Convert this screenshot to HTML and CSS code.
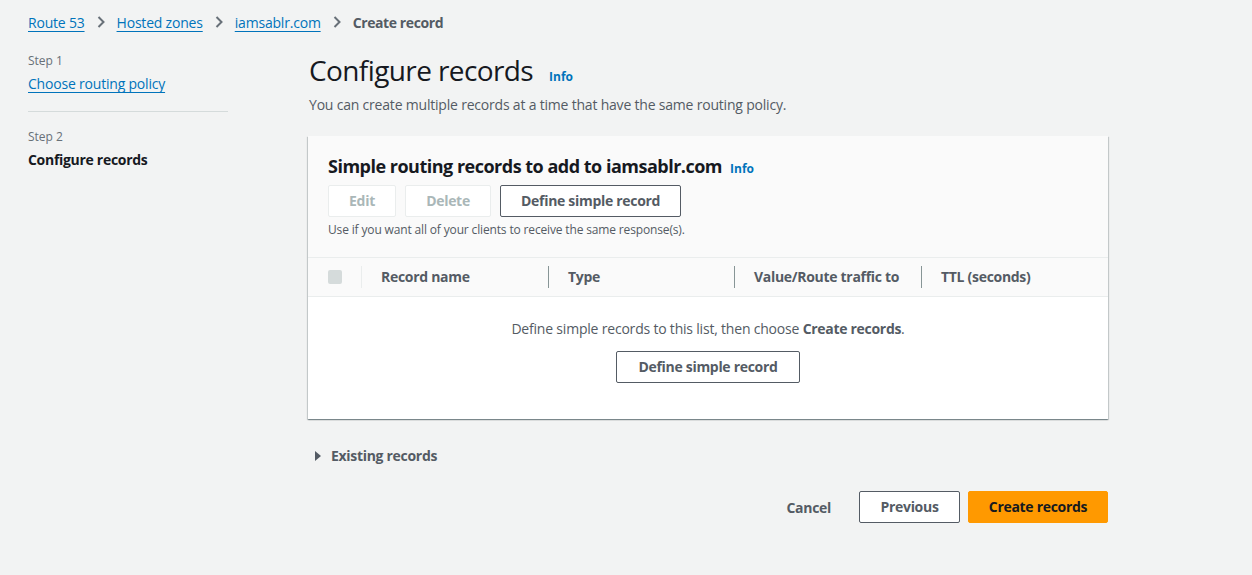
FILE: index.html
```html
<!DOCTYPE html>
<html>
<head>
<meta charset="utf-8">
<link rel="stylesheet" href="styles.css">
</head>
<body>
<div class="page">
  <nav class="breadcrumbs">
    <a href="#" class="crumb-link">Route 53</a>
    <svg class="chev" width="12" height="14" viewBox="0 0 12 14"><path d="M3.5 2 L8.5 7 L3.5 12" fill="none" stroke="#687078" stroke-width="2"/></svg>
    <a href="#" class="crumb-link">Hosted zones</a>
    <svg class="chev" width="12" height="14" viewBox="0 0 12 14"><path d="M3.5 2 L8.5 7 L3.5 12" fill="none" stroke="#687078" stroke-width="2"/></svg>
    <a href="#" class="crumb-link">iamsablr.com</a>
    <svg class="chev" width="12" height="14" viewBox="0 0 12 14"><path d="M3.5 2 L8.5 7 L3.5 12" fill="none" stroke="#687078" stroke-width="2"/></svg>
    <span class="crumb-current">Create record</span>
  </nav>
  <div class="layout">
    <aside class="steps">
      <div class="step">
        <div class="step-label">Step 1</div>
        <a href="#" class="step-link">Choose routing policy</a>
      </div>
      <div class="step-divider"></div>
      <div class="step">
        <div class="step-label">Step 2</div>
        <div class="step-current">Configure records</div>
      </div>
    </aside>
    <main class="main">
      <div class="title-row">
        <h1 class="title">Configure records</h1>
        <a href="#" class="info">Info</a>
      </div>
      <p class="desc">You can create multiple records at a time that have the same routing policy.</p>
      <section class="container">
        <div class="container-header">
          <div class="header-title-row">
            <h2 class="header-title">Simple routing records to add to iamsablr.com</h2>
            <a href="#" class="info info-small">Info</a>
          </div>
          <div class="actions">
            <button class="btn btn-disabled btn-edit">Edit</button>
            <button class="btn btn-disabled btn-delete">Delete</button>
            <button class="btn btn-normal">Define simple record</button>
          </div>
          <div class="hint">Use if you want all of your clients to receive the same response(s).</div>
        </div>
        <div class="table-head">
          <div class="th th-check"><span class="checkbox"></span></div>
          <div class="th th-name">Record name</div>
          <div class="th th-type">Type</div>
          <div class="th th-value">Value/Route traffic to</div>
          <div class="th th-ttl">TTL (seconds)</div>
        </div>
        <div class="empty">
          <div class="empty-text">Define simple records to this list, then choose <b>Create records</b>.</div>
          <button class="btn btn-normal">Define simple record</button>
        </div>
      </section>
      <div class="expander">
        <svg width="10" height="12" viewBox="0 0 10 12"><path d="M2 1 L8 6 L2 11 Z" fill="#545b64"/></svg>
        <span>Existing records</span>
      </div>
      <div class="footer">
        <button class="btn-link">Cancel</button>
        <button class="btn btn-normal btn-footer">Previous</button>
        <button class="btn btn-primary btn-footer">Create records</button>
      </div>
    </main>
  </div>
</div>
</body>
</html>
```
FILE: styles.css
```css
* { box-sizing: border-box; }
html, body { margin: 0; padding: 0; }
body {
  background: #f2f3f3;
  font-family: "Open Sans", "Noto Sans", Arial, sans-serif;
  font-size: 14px;
  letter-spacing: -0.2px;
  color: #16191f;
  width: 1252px;
  height: 575px;
  overflow: hidden;
}
.page { padding: 12px 28px 0 28px; }
.breadcrumbs {
  display: flex;
  align-items: center;
  height: 20px;
  font-size: 14px;
}
.crumb-link {
  color: #0073bb;
  text-decoration: underline;
  text-underline-offset: 3px;
}
.chev { margin: 0 10px 0 10px; }
.crumb-current { color: #545b64; font-weight: 700; letter-spacing: -0.4px; }

.layout { display: flex; gap: 80px; margin-top: 19px; }
.steps { width: 200px; flex: none; }
.step-label { font-size: 12px; color: #687078; line-height: 20px; letter-spacing: 0; }
.step-link {
  display: inline-block;
  color: #0073bb;
  text-decoration: underline;
  text-underline-offset: 3px;
  line-height: 20px;
  margin-top: 3px;
}
.step-divider { height: 1px; background: #d5dbdb; margin: 17px 0 15px 0; }
.step-current { font-weight: 700; line-height: 20px; margin-top: 3px; letter-spacing: -0.3px; }

.main { width: 800px; flex: none; }
.title-row { display: flex; align-items: baseline; margin-top: 1px; }
.title {
  margin: 0;
  font-size: 28px;
  font-weight: 400;
  line-height: 36px;
  padding-left: 1px;
  letter-spacing: -0.6px;
}
.info {
  color: #0073bb;
  font-size: 12px;
  font-weight: 700;
  text-decoration: none;
  margin-left: 16px;
  letter-spacing: 0;
}
.info-small { margin-left: 8px; }
.desc { margin: 6px 0 0 1px; color: #545b64; line-height: 22px; }

.container {
  margin-top: 20px;
  background: #fff;
  box-shadow: 0 1px 1px 0 rgba(0,28,36,0.3), 1px 1px 1px 0 rgba(0,28,36,0.15), -1px 1px 1px 0 rgba(0,28,36,0.15);
}
.container-header {
  background: #fafafa;
  padding: 18px 20px 19px 20px;
  border-bottom: 1px solid #eaeded;
}
.header-title-row { display: flex; align-items: baseline; }
.header-title {
  margin: 0;
  font-size: 18px;
  font-weight: 700;
  line-height: 24px;
  letter-spacing: -0.5px;
}
.actions { display: flex; gap: 9px; margin-top: 7px; }
.btn {
  font-family: inherit;
  font-size: 14px;
  font-weight: 700;
  letter-spacing: -0.3px;
  height: 32px;
  padding: 0 20px;
  border-radius: 2px;
  background: #fff;
  line-height: 30px;
}
.btn-disabled { border: 1px solid #eaeded; color: #aab7b8; }
.btn-edit { width: 68px; }
.btn-delete { width: 86px; }
.btn-normal { border: 1px solid #545b64; color: #545b64; }
.hint { font-size: 12px; color: #545b64; margin-top: 5px; line-height: 16px; letter-spacing: -0.15px; }

.table-head {
  display: flex;
  align-items: center;
  height: 39px;
  background: #fafafa;
  border-bottom: 1px solid #eaeded;
  font-weight: 700;
  color: #545b64;
  letter-spacing: -0.3px;
}
.th { position: relative; padding-left: 20px; line-height: 20px; }
.th-check { width: 53px; padding-left: 20px; display: flex; align-items: center; }
.checkbox { display: block; width: 14px; height: 14px; background: #d5dbdb; border-radius: 2px; }
.th-name { width: 187px; }
.th-type { width: 186px; }
.th-value { width: 187px; }
.th-ttl { flex: 1; }
.th-name::before, .th-type::before, .th-value::before, .th-ttl::before {
  content: "";
  position: absolute;
  left: 0;
  top: -1px;
  width: 1px;
  height: 22px;
  background: #879596;
}
.th-name::before { background: #eaeded; }

.empty {
  display: flex;
  flex-direction: column;
  align-items: center;
  padding: 22px 0 36px 0;
}
.empty-text { color: #545b64; line-height: 20px; }
.empty-text b { font-weight: 700; letter-spacing: -0.3px; }
.empty .btn { margin-top: 12px; width: 184px; padding: 0; }

.expander {
  display: flex;
  align-items: center;
  gap: 8px;
  margin-top: 27px;
  padding-left: 5px;
  font-weight: 700;
  color: #545b64;
  line-height: 20px;
  letter-spacing: -0.3px;
}
.footer {
  display: flex;
  justify-content: flex-end;
  align-items: center;
  gap: 8px;
  margin-top: 25px;
}
.btn-link {
  font-family: inherit;
  font-size: 14px;
  font-weight: 700;
  letter-spacing: -0.3px;
  background: none;
  border: none;
  color: #545b64;
  padding: 0 20px;
  height: 32px;
}
.btn-footer { height: 32px; }
.btn-footer.btn-normal { width: 101px; padding: 0; }
.btn-primary { background: #ff9900; border: 1px solid #ff9900; color: #16191f; width: 140px; padding: 0; }
```
